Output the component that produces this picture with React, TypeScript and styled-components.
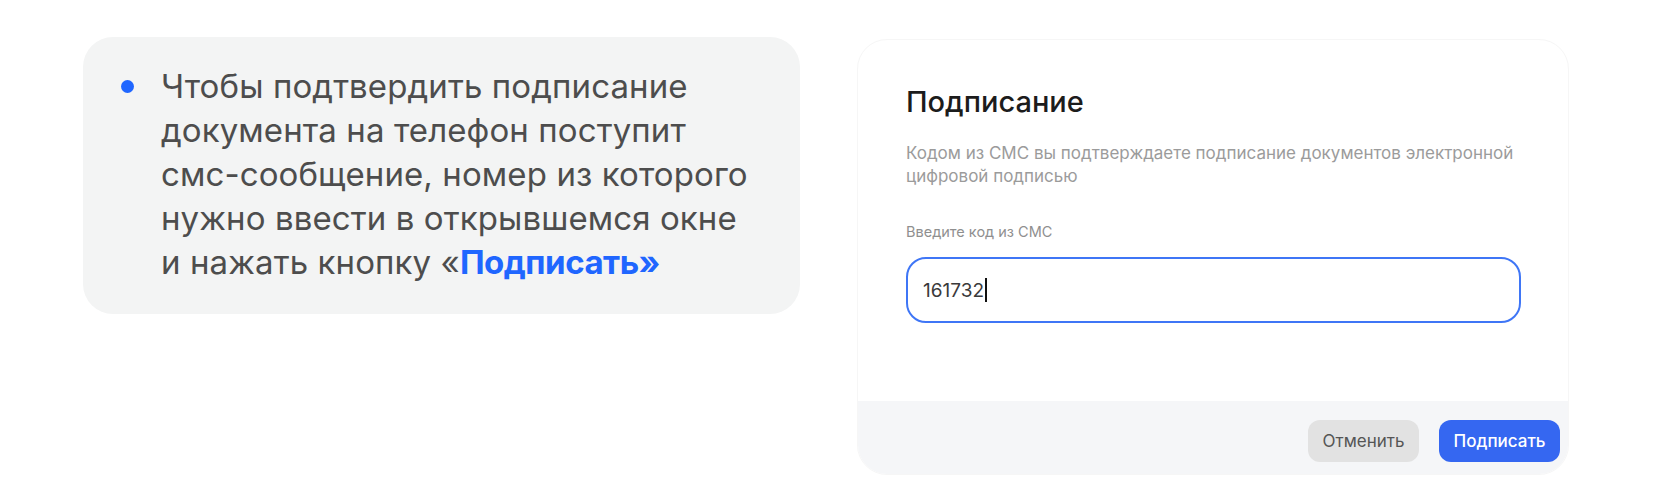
import styled, { createGlobalStyle } from 'styled-components';

const GlobalStyle = createGlobalStyle`
  html, body {
    margin: 0;
    padding: 0;
    background: #ffffff;
  }

  body {
    font-family: Inter, 'Noto Sans', 'Liberation Sans', sans-serif;
  }
`;

const Page = styled.div`
  width: 1653px;
  height: 482px;
  display: flex;
  align-items: flex-start;
  gap: 57px;
  padding: 37px 0 0 83px;
  box-sizing: border-box;
  overflow: hidden;
`;

const HintCard = styled.div`
  width: 717px;
  height: 277px;
  box-sizing: border-box;
  padding: 27px 20px 0 38px;
  border-radius: 30px;
  background: #f3f4f4;
`;

const BulletRow = styled.div`
  display: flex;
  align-items: flex-start;
  gap: 27px;
`;

const Dot = styled.span`
  flex: none;
  width: 13px;
  height: 13px;
  margin-top: 16px;
  border-radius: 50%;
  background: #1f66ff;
`;

const HintText = styled.p`
  margin: 0;
  font-size: 33px;
  line-height: 44px;
  font-weight: 400;
  color: #4d4d4d;
  letter-spacing: 0.1px;
  white-space: nowrap;
`;

const Accent = styled.b`
  font-weight: 700;
  letter-spacing: -0.5px;
  color: #1f66ff;
`;

const Dialog = styled.div`
  width: 712px;
  height: 436px;
  margin-top: 2px;
  display: flex;
  flex-direction: column;
  box-sizing: border-box;
  border: 1px solid #f6f6f6;
  border-radius: 30px;
  background: #ffffff;
  overflow: hidden;
`;

const DialogBody = styled.div`
  flex: 1;
  padding: 46px 47px 0 48px;
`;

const Title = styled.h2`
  margin: 0;
  font-size: 29px;
  line-height: 32px;
  font-weight: 500;
  color: #1c1c1c;
`;

const Description = styled.p`
  margin: 24px 0 0;
  font-size: 17px;
  line-height: 23px;
  color: #9b9b9b;
  white-space: nowrap;
`;

const FieldLabel = styled.label`
  display: block;
  margin-top: 34px;
  font-size: 14.5px;
  line-height: 20px;
  color: #8f8f8f;
`;

const CodeInput = styled.div`
  display: flex;
  align-items: center;
  height: 66px;
  margin-top: 15px;
  padding: 0 15px;
  box-sizing: border-box;
  border: 2.5px solid #3f76f6;
  border-radius: 20px;
  font-size: 19px;
  color: #3a3a3a;
`;

const Caret = styled.span`
  width: 1.5px;
  height: 24px;
  margin-left: 1px;
  background: #111111;
`;

const Footer = styled.div`
  flex: none;
  height: 73px;
  display: flex;
  justify-content: flex-end;
  align-items: flex-start;
  gap: 20px;
  padding: 19px 8px 0 0;
  box-sizing: border-box;
  background: #f5f6f8;
`;

const Button = styled.button<{ primary?: boolean }>`
  width: ${(props) => (props.primary ? '121px' : '111px')};
  height: 42px;
  padding: 0;
  border: none;
  border-radius: 12px;
  font-family: inherit;
  font-size: 17px;
  font-weight: ${(props) => (props.primary ? 500 : 400)};
  color: ${(props) => (props.primary ? '#ffffff' : '#555555')};
  background: ${(props) => (props.primary ? '#3567f1' : '#e2e2e2')};
`;

const App = () => {
  return (
    <>
      <GlobalStyle />
      <Page>
        <HintCard>
          <BulletRow>
            <Dot />
            <HintText>
              Чтобы подтвердить подписание
              <br />
              документа на телефон поступит
              <br />
              смс-сообщение, номер из которого
              <br />
              нужно ввести в открывшемся окне
              <br />и нажать кнопку «<Accent>Подписать»</Accent>
            </HintText>
          </BulletRow>
        </HintCard>
        <Dialog>
          <DialogBody>
            <Title>Подписание</Title>
            <Description>
              Кодом из СМС вы подтверждаете подписание документов электронной
              <br />
              цифровой подписью
            </Description>
            <FieldLabel>Введите код из СМС</FieldLabel>
            <CodeInput>
              161732
              <Caret />
            </CodeInput>
          </DialogBody>
          <Footer>
            <Button>Отменить</Button>
            <Button primary>Подписать</Button>
          </Footer>
        </Dialog>
      </Page>
    </>
  );
};

export default App;
